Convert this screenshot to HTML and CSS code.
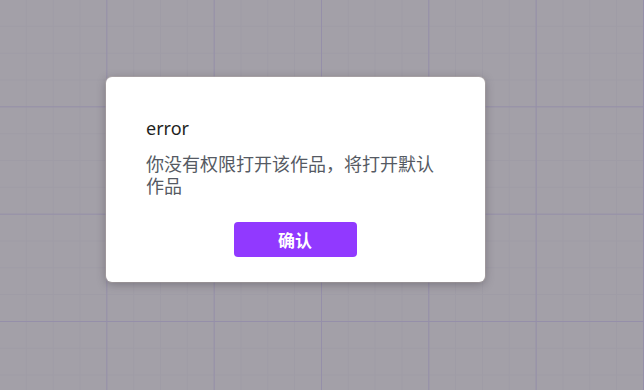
FILE: index.html
```html
<!DOCTYPE html>
<html lang="zh-CN">
<head>
<meta charset="utf-8">
<title>error</title>
<link rel="stylesheet" href="styles.css">
</head>
<body>
<div class="overlay">
  <div class="dialog">
    <div class="dialog-title">error</div>
    <div class="dialog-message">你没有权限打开该作品，将打开默认作品</div>
    <div class="dialog-actions">
      <button class="btn-confirm" type="button">确认</button>
    </div>
  </div>
</div>
</body>
</html>
```
FILE: styles.css
```css
html, body {
  margin: 0;
  padding: 0;
  width: 644px;
  height: 390px;
  overflow: hidden;
}

body {
  font-family: "Noto Sans", "Noto Sans CJK SC", sans-serif;
  background-color: #a3a0a8;
  background-image:
    linear-gradient(to right, #958fa9 1px, transparent 1px),
    linear-gradient(to bottom, #958fa9 1px, transparent 1px),
    linear-gradient(to right, #9f9ca6 1px, transparent 1px),
    linear-gradient(to bottom, #9f9ca6 1px, transparent 1px);
  background-size:
    107.33px 107.33px,
    107.33px 107.33px,
    26.83px 26.83px,
    26.83px 26.83px;
  background-position: -1px -1px, -1px -1px, -1px -1px, -1px -1px;
}

.overlay {
  box-sizing: border-box;
  width: 644px;
  height: 390px;
  padding: 77px 0 0 106px;
}

.dialog {
  box-sizing: border-box;
  width: 379px;
  height: 205px;
  padding: 39px 40px 25px 40px;
  background: #ffffff;
  border-radius: 6px;
  box-shadow: 0 2px 10px rgba(40, 35, 45, 0.35), 0 0 0 1px rgba(200, 190, 185, 0.5);
  display: flex;
  flex-direction: column;
}

.dialog-title {
  font-size: 18px;
  line-height: 24px;
  color: #1f1f22;
}

.dialog-message {
  margin-top: 13px;
  font-size: 18px;
  line-height: 22px;
  color: #555a63;
}

.dialog-actions {
  margin-top: 25px;
  display: flex;
  justify-content: center;
}

.btn-confirm {
  width: 123px;
  height: 35px;
  border: none;
  border-radius: 4px;
  background: #9139ff;
  color: #ffffff;
  font-family: "Noto Sans CJK SC", sans-serif;
  font-size: 17px;
  font-weight: 700;
  padding: 0;
  margin-left: -1px;
}
```
